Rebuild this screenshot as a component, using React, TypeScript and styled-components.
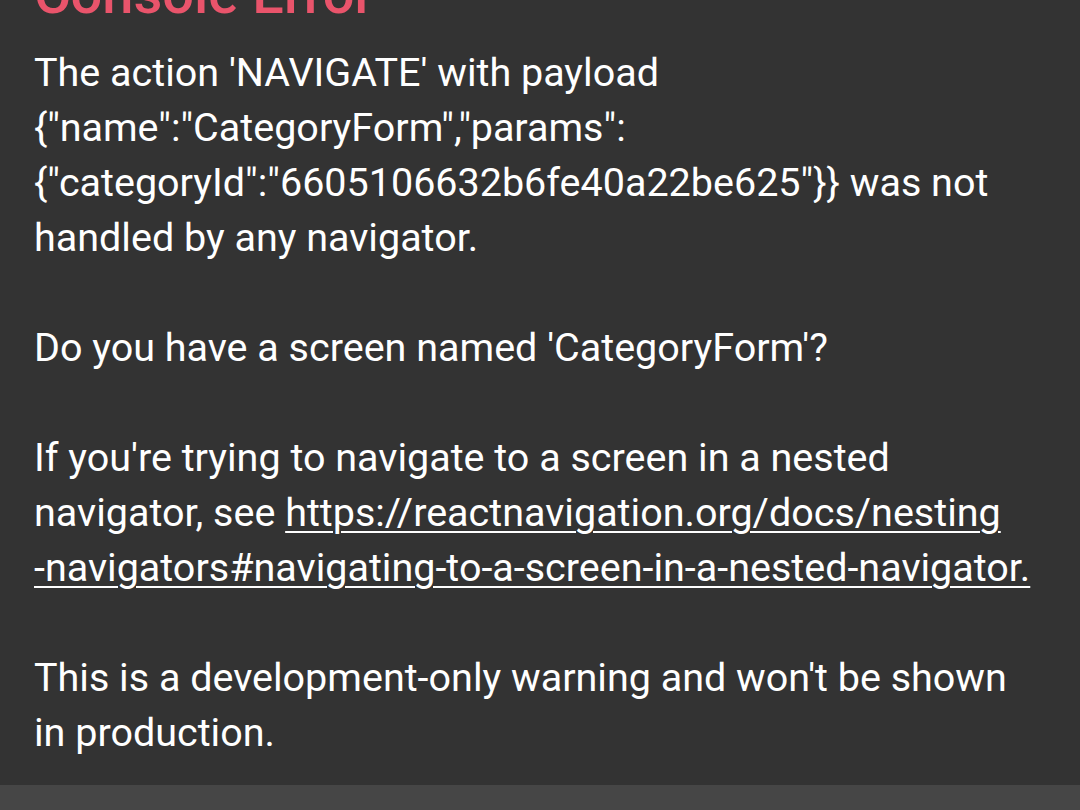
import React from 'react';
import styled, { createGlobalStyle } from 'styled-components';

const GlobalStyle = createGlobalStyle`
  html, body {
    margin: 0;
    padding: 0;
    background: #333333;
  }
  body {
    font-family: Roboto, 'Noto Sans', sans-serif;
  }
`;

const Screen = styled.div`
  display: flex;
  flex-direction: column;
  width: 1080px;
  height: 810px;
  overflow: hidden;
  background: #333333;
`;

const Scroll = styled.div`
  flex: 1;
  overflow: hidden;
  padding: 0 34px;
`;

const Title = styled.h1`
  margin: -38px 0 0;
  font-size: 56px;
  line-height: 64px;
  font-weight: 500;
  color: #e9546b;
`;

const Message = styled.p`
  margin: 19px 0 0;
  font-size: 39.5px;
  line-height: 55px;
  color: #ffffff;
  white-space: pre;
`;

const Link = styled.a`
  color: inherit;
  text-decoration: underline;
  text-decoration-thickness: 2px;
  text-underline-offset: 5px;
`;

const BottomBar = styled.div`
  height: 25px;
  background: #464646;
`;

export default function App() {
  return (
    <Screen>
      <GlobalStyle />
      <Scroll>
        <Title>Console Error</Title>
        <Message>
          {`The action 'NAVIGATE' with payload
{"name":"CategoryForm","params":
{"categoryId":"6605106632b6fe40a22be625"}} was not
handled by any navigator.

Do you have a screen named 'CategoryForm'?

If you're trying to navigate to a screen in a nested
navigator, see `}
          <Link href="#">
            {`https://reactnavigation.org/docs/nesting
-navigators#navigating-to-a-screen-in-a-nested-navigator.`}
          </Link>
          {`

This is a development-only warning and won't be shown
in production.`}
        </Message>
      </Scroll>
      <BottomBar />
    </Screen>
  );
}
